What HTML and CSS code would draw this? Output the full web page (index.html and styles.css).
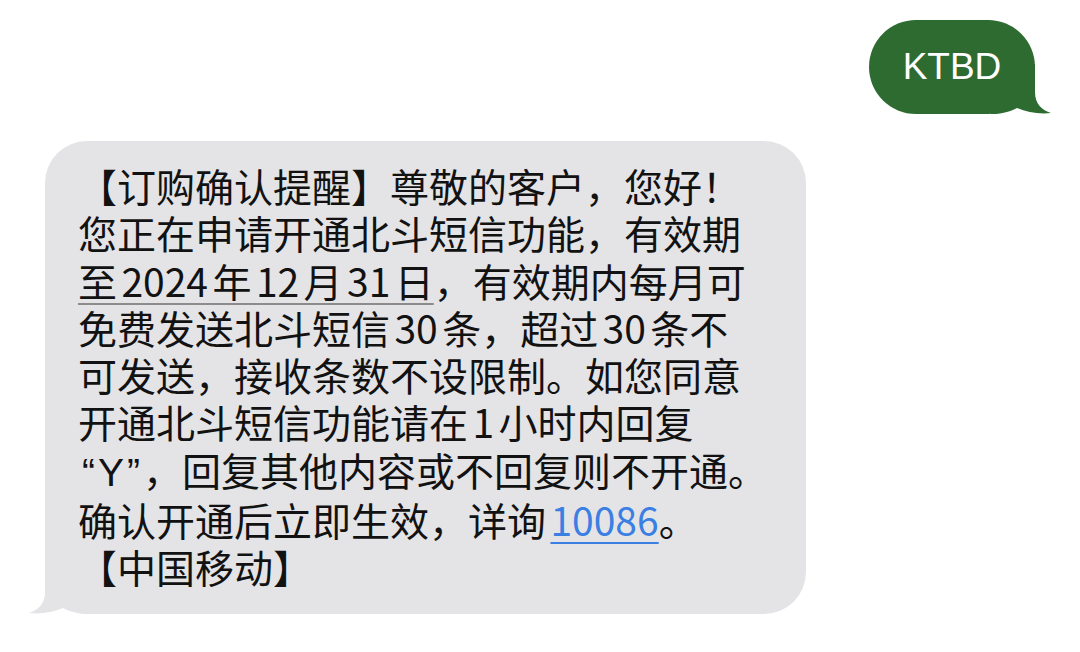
FILE: index.html
```html
<!DOCTYPE html>
<html lang="zh-CN">
<head>
<meta charset="utf-8">
<title>短信</title>
<link rel="stylesheet" href="styles.css">
</head>
<body>
<div class="thread">
  <div class="row row-out">
    <div class="bubble bubble-out">
      <span class="out-text">KTBD</span>
      <svg class="tail tail-out" width="70" height="50" viewBox="0 0 70 50" aria-hidden="true">
        <path d="M50,0 L50,28 C50,40 57,46 66,49 C54,50.5 42,48 32,44 C24,48 16,50 6,50 L6,0 Z" fill="#2e6b31"/>
      </svg>
    </div>
  </div>
  <div class="row row-in">
    <div class="bubble bubble-in">
      <p class="msg">【订购确认提醒】尊敬的客户，您好！<br>您正在申请开通北斗短信功能，有效期<br><span class="date">至 2024 年 12 月 31 日</span>，有效期内每月可<br>免费发送北斗短信 30 条，超过 30 条不<br>可发送，接收条数不设限制。如您同意<br>开通北斗短信功能请在 1 小时内回复<br><span class="q">“Y”</span>，回复其他内容或不回复则不开通。<br>确认开通后立即生效，详询 <span class="link">10086</span>。<br>【中国移动】</p>
      <svg class="tail tail-in" width="70" height="50" viewBox="0 0 70 50" aria-hidden="true">
        <path d="M20,0 L20,28 C20,40 13,46 4,49 C16,50.5 28,48 38,44 C46,48 54,50 64,50 L64,0 Z" fill="#e4e4e7"/>
      </svg>
    </div>
  </div>
</div>
</body>
</html>
```
FILE: styles.css
```css
html, body {
  margin: 0;
  padding: 0;
  background: #ffffff;
}
.thread {
  display: flex;
  flex-direction: column;
  width: 1080px;
  height: 652px;
  overflow: hidden;
}
.row {
  display: flex;
}
.row-out {
  justify-content: flex-end;
  padding: 20px 45px 0 0;
}
.row-in {
  justify-content: flex-start;
  padding: 27px 0 0 45px;
}
.bubble {
  position: relative;
}
.bubble-out {
  box-sizing: border-box;
  height: 94px;
  width: 166px;
  border-radius: 47px;
  background: #2e6b31;
  display: flex;
  align-items: center;
  justify-content: center;
}
.out-text {
  position: relative;
  z-index: 1;
  font-family: "Liberation Sans", Arial, sans-serif;
  font-size: 37px;
  color: #ffffff;
}
.bubble-in {
  box-sizing: border-box;
  width: 761px;
  border-radius: 42px;
  background: #e4e4e7;
  padding: 21px 20px 24px 33px;
}
.msg {
  position: relative;
  z-index: 1;
  margin: 0;
  font-family: "Noto Sans CJK SC", "Noto Sans", sans-serif;
  font-size: 39px;
  line-height: 47.25px;
  color: #121212;
  word-spacing: -4.3px;
}
.q {
  font-family: "Liberation Sans", "Noto Sans", sans-serif;
  letter-spacing: 3px;
  margin-left: 4px;
}
.date {
  text-decoration: underline;
  text-decoration-color: #8c8c8c;
  text-decoration-thickness: 2px;
  text-underline-offset: 6px;
}
.link {
  color: #3b7fe3;
  text-decoration: underline;
  text-decoration-color: #3b7fe3;
  text-decoration-thickness: 2px;
  text-underline-offset: 6px;
}
.tail {
  position: absolute;
  bottom: 0;
  display: block;
}
.tail-in {
  left: -20px;
}
.tail-out {
  right: -20px;
}
```
